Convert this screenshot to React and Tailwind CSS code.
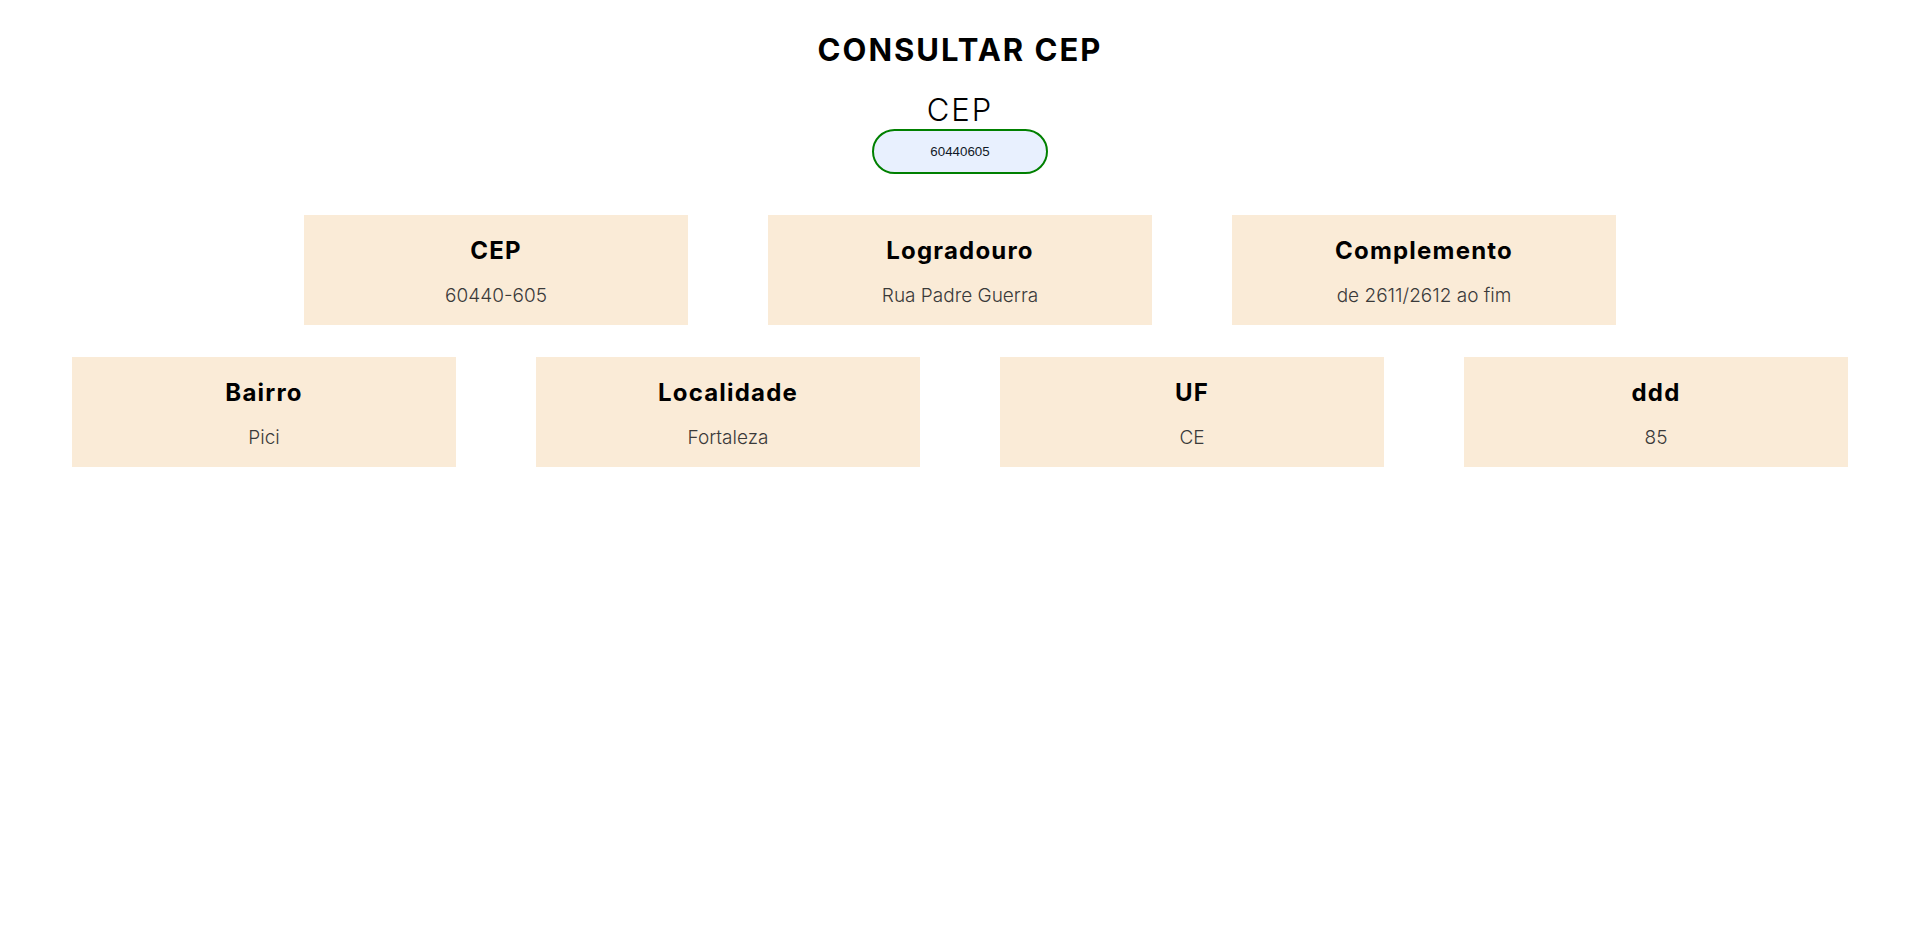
import React from "react";

const row1 = [
  ["CEP", "60440-605"],
  ["Logradouro", "Rua Padre Guerra"],
  ["Complemento", "de 2611/2612 ao fim"],
];
const row2 = [
  ["Bairro", "Pici"],
  ["Localidade", "Fortaleza"],
  ["UF", "CE"],
  ["ddd", "85"],
];

function Card({ title, value }) {
  return (
    <div className="w-[384px] h-[110px] bg-[#faebd7] flex flex-col items-center pt-[21px]">
      <h2 className="text-[24px] leading-[29px] font-bold text-black tracking-[1.2px]">{title}</h2>
      <p className="mt-[19px] text-[19px] leading-[24px] font-light text-[#3a3a3a]">{value}</p>
    </div>
  );
}

export default function App() {
  return (
    <div
      className="min-h-screen bg-white flex flex-col items-center"
      style={{ fontFamily: "Inter, 'Noto Sans', sans-serif" }}
    >
      <h1 className="mt-[30px] text-[31px] leading-[39px] font-bold text-black tracking-[2px]">CONSULTAR CEP</h1>
      <label className="mt-[21px] text-[31px] leading-[39px] font-light text-black tracking-[2px]">CEP</label>
      <input
        readOnly
        value="60440605"
        className="w-[176px] h-[45px] rounded-full border-2 border-[#008000] bg-[#e8f0fe] text-center text-[13.33px] text-[#111827] outline-none"
        style={{ fontFamily: "'Liberation Sans', Arial, sans-serif" }}
      />
      <div className="mt-[41px] flex gap-20">
        {row1.map(([t, v]) => (
          <Card key={t} title={t} value={v} />
        ))}
      </div>
      <div className="mt-8 flex gap-20">
        {row2.map(([t, v]) => (
          <Card key={t} title={t} value={v} />
        ))}
      </div>
    </div>
  );
}
